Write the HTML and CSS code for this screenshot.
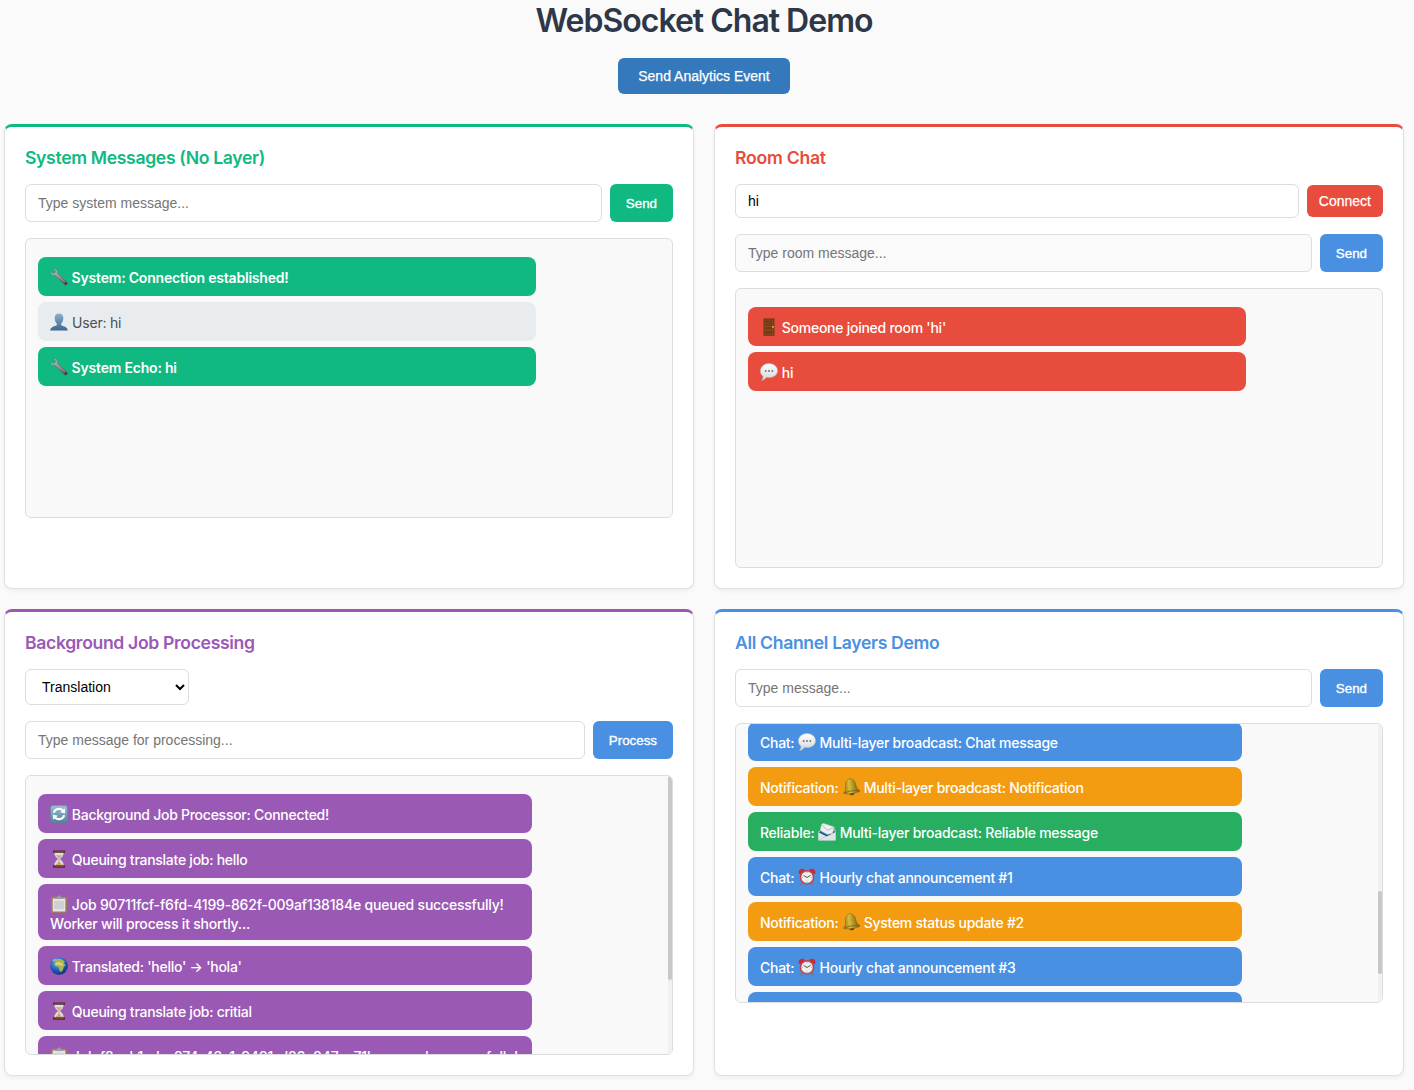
FILE: index.html
```html
<!DOCTYPE html>
<html lang="en">
<head>
<meta charset="utf-8">
<title>WebSocket Chat Demo</title>
<link rel="stylesheet" href="styles.css">
</head>
<body>
<svg class="sprite" aria-hidden="true">
  <defs>
    <linearGradient id="steel" x1="0" y1="0" x2="1" y2="1"><stop offset="0" stop-color="#cfd1d2"/><stop offset=".55" stop-color="#85868a"/><stop offset="1" stop-color="#4a4144"/></linearGradient>
    <linearGradient id="person" x1="0" y1="0" x2="0" y2="1"><stop offset="0" stop-color="#8fb0cd"/><stop offset="1" stop-color="#3d6690"/></linearGradient>
    <linearGradient id="tile" x1="0" y1="0" x2="0" y2="1"><stop offset="0" stop-color="#9cc0d6"/><stop offset="1" stop-color="#51829f"/></linearGradient>
    <linearGradient id="cloud" x1="0" y1="0" x2="0" y2="1"><stop offset="0" stop-color="#fff"/><stop offset="1" stop-color="#d2d6d9"/></linearGradient>
    <linearGradient id="gold" x1="0" y1="0" x2="1" y2="0"><stop offset="0" stop-color="#8d6d14"/><stop offset=".4" stop-color="#d9bb38"/><stop offset="1" stop-color="#70560f"/></linearGradient>
    <radialGradient id="sea" cx=".4" cy=".3" r=".7"><stop offset="0" stop-color="#6db4ee"/><stop offset=".55" stop-color="#2667c4"/><stop offset="1" stop-color="#123277"/></radialGradient>
  </defs>
  <symbol id="wrench" viewBox="0 0 18 18"><path d="M2.800.6 5.400 2.600 5.200 4.600 3.300 5.500.8 3.800C.2 6.200 2.400 8 5 7.300L14.300 16.600C15.500 18 18.200 16.400 17.200 14.600L7.600 5.600C8.300 2.700 5.700-.1 2.800.600Z" fill="url(#steel)" stroke="#5a5a5d" stroke-width=".4"/><path d="m7 6.600 8 7.500" stroke="#b7a6a5" stroke-width=".7"/><circle cx="15.600" cy="15.300" r=".7" fill="#211d1f"/></symbol>
  <symbol id="user" viewBox="0 0 18 18"><path d="M4.700 5C4.700 1.800 6.500.4 9 .4S13.300 1.800 13.300 5C13.300 7.800 12.300 9.600 11.200 10.600V12.200C13.200 13.200 17.600 13.600 17.800 17.600H.2C.4 13.600 4.800 13.200 6.800 12.200V10.600C5.700 9.600 4.700 7.800 4.700 5Z" fill="url(#person)"/></symbol>
  <symbol id="door" viewBox="0 0 18 18"><path d="M3.600.4H14.400V17.700H3.600Z" fill="#5b3318"/><path d="M4.600 1.500H13.400V17H4.600Z" fill="#93501f"/><path d="M5.800 2.800H12V7.500H5.800ZM5.800 9.600H12V11H5.800ZM5.800 13H12V15.800H5.800Z" fill="#7b3f1c" stroke="#5c2e17" stroke-width=".6"/><circle cx="13" cy="9" r=".9" fill="#e6b83c"/></symbol>
  <symbol id="speech" viewBox="0 0 18 18"><path d="M9 .6C13.700.6 17.500 3.700 17.500 7.700S13.700 14.500 9.300 14.500C8.300 14.500 7.300 14.400 6.400 14.200 5.300 15.900 3.600 17.200 1.600 17.600 2.600 16.300 3.200 14.700 3 13.100 1.300 11.800.4 10 .4 7.900.4 3.800 4.200.6 9 .6Z" fill="url(#cloud)" stroke="#b9bdc0" stroke-width=".5"/><circle cx="5.700" cy="8" r="1" fill="#777"/><circle cx="9" cy="8" r="1" fill="#777"/><circle cx="12.300" cy="8" r="1" fill="#777"/></symbol>
  <symbol id="refresh" viewBox="0 0 18 18"><rect x=".3" y=".3" width="17.400" height="17.400" rx="3" fill="url(#tile)" stroke="#5e7f93" stroke-width=".6"/><path d="M3.800 7.800A5.500 5.500 0 0 1 13 5.500M14.200 10.200A5.500 5.500 0 0 1 5 12.500" fill="none" stroke="#fff" stroke-width="2.100"/><path d="m14.800 3.200.4 5.200-5-1.200ZM3.200 14.800 2.800 9.600 7.800 10.800Z" fill="#fff"/></symbol>
  <symbol id="hourglass" viewBox="0 0 18 18"><path d="M4.300 2H13.700C13.700 5.500 12.300 7 10 9 12.300 11 13.700 12.500 13.700 16H4.300C4.300 12.500 5.700 11 8 9 5.700 7 4.300 5.500 4.300 2Z" fill="#dedfe4" stroke="#a8a3ad" stroke-width=".5"/><path d="M5.700 5.200H12.300L9 8.500ZM9 11.500 12.800 15.500H5.200Z" fill="#d6a675"/><path d="M8.700 8H9.300V14H8.700Z" fill="#b87f4b"/><path d="M3 .4H15V2.800H3ZM3 15.200H15V17.700H3Z" fill="#542a1d"/><path d="M4 1H14V1.600H4ZM4 15.800H14V16.400H4Z" fill="#9c5d3b"/></symbol>
  <symbol id="clipboard" viewBox="0 0 18 18"><rect x="1.200" y="1.800" width="15.600" height="16" rx="1.200" fill="#a47d50"/><path d="M2.700 3.500H15.300V16.500H2.700Z" fill="#e3e4e4"/><path d="M4 6H14V14H4Z" fill="#cfd0d1"/><path d="M5.200 3.900V2.300H7.300C7.500.9 8 .4 9 .4S10.500.9 10.700 2.300H12.800V3.900Z" fill="#9aa0a2"/></symbol>
  <symbol id="globe" viewBox="0 0 18 18"><circle cx="9" cy="9" r="8.800" fill="url(#sea)"/><path d="M4.500 3.800C6 1.800 8.700 1.700 12 2.400L14.800 4.600 13.900 6.800 16 8.200 13.900 9.400 12.700 13.200 10.600 15.300 9.200 12.500 8.500 9.900 5.300 9 4.300 6.900 6 5Z" fill="#a6b84d"/><path d="M5.600 5.700 9.500 5 13 7.200 12.600 8.800 8.700 7.800 5.400 8Z" fill="#e1cf79"/><path d="M2.600 3.700 4.800 1.700 5.800 2.200 3.700 4.500Z" fill="#b1cf8a"/></symbol>
  <symbol id="bell" viewBox="0 0 18 18"><g transform="rotate(-8 9 9)"><ellipse cx="9" cy="15.300" rx="2.600" ry="2" fill="#5d470e"/><path d="M6.800 1.700C7 0 10.700 0 10.900 1.700 13.600 2.600 14 5.300 14.300 8.800 14.600 11.700 15.800 12.500 17.500 14.200 14.500 15.900 4.200 16.300.6 14.200 2.500 12.400 3.300 11 3.600 8.200 3.900 4.600 4.400 2.500 6.800 1.700Z" fill="url(#gold)" stroke="#6e5514" stroke-width=".4"/><path d="M2.500 13.800C6 12.600 12 12.600 15.700 13.800" fill="none" stroke="#7d6217" stroke-width=".8"/></g></symbol>
  <symbol id="mail" viewBox="0 0 18 18"><path d="M.4 8 17.600 6.500V17.300H.4Z" fill="#b8c1c5"/><path d="M1.200 9.500 4 5 15.700 6.800 17 9.500 9 14Z" fill="#1c5c98"/><path d="M3.600 1.200 5.500.3 16.600 4.100 14.500 10.500 9.200 11.500 2 7.600Z" fill="#eceeef" stroke="#abb0b4" stroke-width=".4"/><path d="m4 2 5.300 5.300 6.600-2.800" fill="none" stroke="#a1a9af" stroke-width=".7"/><path d="M.4 9.800 8.700 13.600 17.600 9V17.500H.4Z" fill="#dfe4e6"/><path d="M.7 17.200 7.600 13.300" stroke="#aab3b7" stroke-width=".5"/></symbol>
  <symbol id="alarm" viewBox="0 0 18 18"><path d="m4.500 14.500-2 3M13.500 14.500l2 3" stroke="#777b7d" stroke-width="1.600"/><path d="M.7 5.500C-.2 2.500 2.400-.2 6 .9L6.400 2.600 2.400 6.200ZM17.300 5.500C18.200 2.500 15.600-.2 12 .9L11.600 2.600 15.600 6.200Z" fill="#c52e36"/><circle cx="9" cy="9.300" r="7.300" fill="#cf3540"/><circle cx="9" cy="9.300" r="5.900" fill="#eef0ee" stroke="#8e8884" stroke-width=".5"/><path d="M5.600 7.400 9 9.500 12.600 7.300" fill="none" stroke="#474747" stroke-width=".9"/><path d="M9 4.300V5.200M9 13.500V14.400M4 9.300H4.900M13.100 9.300H14" stroke="#666" stroke-width=".6"/></symbol>
</svg>

<div class="container">
  <h1 class="page-title">WebSocket Chat Demo</h1>
  <div class="actions"><button class="analytics">Send Analytics Event</button></div>

  <main class="grid">
    <section class="card card-system">
      <h2>System Messages (No Layer)</h2>
      <form class="row">
        <input class="field" type="text" placeholder="Type system message...">
        <button class="btn btn-system" type="button">Send</button>
      </form>
      <div class="log">
        <p class="msg system"><svg class="emoji"><use href="#wrench"/></svg> System: Connection established!</p>
        <p class="msg user"><svg class="emoji"><use href="#user"/></svg> User: hi</p>
        <p class="msg system"><svg class="emoji"><use href="#wrench"/></svg> System Echo: hi</p>
      </div>
    </section>

    <section class="card card-room">
      <h2>Room Chat</h2>
      <form class="row room-row">
        <input class="field" type="text" value="hi">
        <button class="btn btn-connect" type="button">Connect</button>
      </form>
      <form class="row">
        <input class="field muted" type="text" placeholder="Type room message...">
        <button class="btn" type="button">Send</button>
      </form>
      <div class="log">
        <p class="msg room"><svg class="emoji"><use href="#door"/></svg> Someone joined room 'hi'</p>
        <p class="msg room"><svg class="emoji"><use href="#speech"/></svg> hi</p>
      </div>
    </section>

    <section class="card card-job">
      <h2>Background Job Processing</h2>
      <select class="job-type"><option>Translation</option><option>Analysis</option><option>Text Generation</option></select>
      <form class="row">
        <input class="field" type="text" placeholder="Type message for processing...">
        <button class="btn" type="button">Process</button>
      </form>
      <div class="log scrollable">
        <p class="msg job"><svg class="emoji"><use href="#refresh"/></svg> Background Job Processor: Connected!</p>
        <p class="msg job"><svg class="emoji"><use href="#hourglass"/></svg> Queuing translate job: hello</p>
        <p class="msg job with-id"><svg class="emoji"><use href="#clipboard"/></svg> Job 90711fcf-f6fd-4199-862f-009af138184e queued successfully!<br>Worker will process it shortly...</p>
        <p class="msg job"><svg class="emoji"><use href="#globe"/></svg> Translated: 'hello' → 'hola'</p>
        <p class="msg job"><svg class="emoji"><use href="#hourglass"/></svg> Queuing translate job: critial</p>
        <p class="msg job with-id"><svg class="emoji"><use href="#clipboard"/></svg> Job f2ceb1ed-c074-42a1-9401-d26e847ac71b queued successfully!</p>
        <div class="track"><div class="thumb thumb-job"></div></div>
      </div>
    </section>

    <section class="card card-all">
      <h2>All Channel Layers Demo</h2>
      <form class="row">
        <input class="field" type="text" placeholder="Type message...">
        <button class="btn" type="button">Send</button>
      </form>
      <div class="log scrollable scrolled">
        <p class="msg chat">Chat: <svg class="emoji"><use href="#speech"/></svg> Multi-layer broadcast: Chat message</p>
        <p class="msg notification">Notification: <svg class="emoji"><use href="#bell"/></svg> Multi-layer broadcast: Notification</p>
        <p class="msg reliable">Reliable: <svg class="emoji"><use href="#mail"/></svg> Multi-layer broadcast: Reliable message</p>
        <p class="msg chat">Chat: <svg class="emoji"><use href="#alarm"/></svg> Hourly chat announcement #1</p>
        <p class="msg notification">Notification: <svg class="emoji"><use href="#bell"/></svg> System status update #2</p>
        <p class="msg chat">Chat: <svg class="emoji"><use href="#alarm"/></svg> Hourly chat announcement #3</p>
        <p class="msg chat"></p>
        <div class="track"><div class="thumb thumb-all"></div></div>
      </div>
    </section>
  </main>
</div>
</body>
</html>
```
FILE: styles.css
```css
* { box-sizing: border-box; }

body {
  margin: 0;
  height: 1090px;
  overflow: hidden;
  background: #fafafa;
  color: #2d3748;
  font-family: Inter, "Liberation Sans", sans-serif;
  font-size: 14px;
}

.sprite { display: block; width: 0; height: 0; }

.container { width: 1400px; margin-left: 4px; }

.page-title {
  margin: 0;
  height: 58px;
  line-height: 41px;
  font-size: 32px;
  font-weight: 600;
  letter-spacing: -1px;
  text-align: center;
}

.actions { display: flex; justify-content: center; margin-bottom: 30px; }

button, input, select { font-family: "Liberation Sans", Arial, sans-serif; }

.analytics {
  width: 172px;
  height: 36px;
  padding: 0;
  border: 0;
  border-radius: 6px;
  background: #3579bd;
  color: #fff;
  font-size: 14px;
  -webkit-text-stroke: 0.25px #fff;
}

.grid {
  display: grid;
  grid-template-columns: 1fr 1fr;
  grid-template-rows: 465px 467px;
  gap: 20px;
}

.card {
  padding: 20px;
  border: 1px solid #e0e0e0;
  border-top: 3px solid var(--accent);
  border-radius: 8px;
  background: #fff;
  box-shadow: 0 2px 4px rgba(0, 0, 0, 0.05);
}

.card-system { --accent: #10b981; }
.card-room { --accent: #e74c3c; }
.card-job { --accent: #9b59b6; }
.card-all { --accent: #4a90e2; }

.card h2 {
  margin: 0 0 15px;
  line-height: 22px;
  font-size: 17.6px;
  font-weight: 600;
  letter-spacing: -0.34px;
  color: var(--accent);
}
.card-room h2 { letter-spacing: -0.25px; }

.row { display: flex; gap: 8px; height: 38px; margin: 0 0 16px; }
.room-row { height: 34px; align-items: center; }

.field {
  flex: 1;
  min-width: 0;
  height: 100%;
  padding: 0 12px;
  border: 1px solid #ddd;
  border-radius: 6px;
  background: #fff;
  color: #000;
  font-size: 14px;
}
.field::placeholder { color: #757575; }
.field.muted { background: #fafafa; }

.btn {
  padding: 0 16px;
  border: 0;
  border-radius: 6px;
  background: #4a90e2;
  color: #fff;
  font-size: 13.333px;
  -webkit-text-stroke: 0.35px #fff;
}
.btn-system { background: #10b981; }
.btn-connect { height: 32px; padding: 0 12px; background: #e74c3c; font-size: 14px; -webkit-text-stroke-width: 0.25px; }

.job-type {
  display: block;
  width: 164px;
  height: 36px;
  margin-bottom: 16px;
  padding: 0 0 0 12px;
  border: 1px solid #ddd;
  border-radius: 6px;
  background: #fff;
  color: #000;
  font-size: 14px;
}

.log {
  position: relative;
  height: 280px;
  padding: 18px 12px;
  overflow: hidden;
  border: 1px solid #ddd;
  border-radius: 6px;
  background: #f9f9f9;
  display: flex;
  flex-direction: column;
  gap: 6px;
}

.msg {
  flex: none;
  width: 80%;
  min-height: 39px;
  margin: 0;
  padding: 11px 12px 7px;
  border-radius: 8px;
  line-height: 19px;
  font-weight: 500;
  letter-spacing: -0.26px;
  color: #fff;
  white-space: nowrap;
}
.scrollable { padding-right: 16px; }
.scrolled { padding-top: 0; }
.scrolled .msg:first-child { margin-top: -2px; }

.system { background: #10b981; font-weight: 600; letter-spacing: -0.2px; }
.user { background: #e9ecef; color: #495057; font-weight: 400; letter-spacing: -0.2px; }
.room { background: #e74c3c; }
.job { background: #9b59b6; }
.job.with-id { letter-spacing: -0.19px; }
.chat { background: #4a90e2; }
.notification { background: #f39c12; }
.reliable { background: #27ae60; }

.emoji { width: 18px; height: 18px; margin: -2px 0.3px -2px 0; vertical-align: -1px; }

/* Slim scrollbar laid over the right edge of the log */
.track {
  position: absolute;
  top: 0;
  right: 0;
  width: 4px;
  height: 100%;
  background: #f1f1f1;
}
.thumb { width: 4px; border-radius: 2px; background: #c8c8c8; }
.thumb-job { height: 204px; }
.thumb-all { height: 83px; margin-top: 167px; }
```
